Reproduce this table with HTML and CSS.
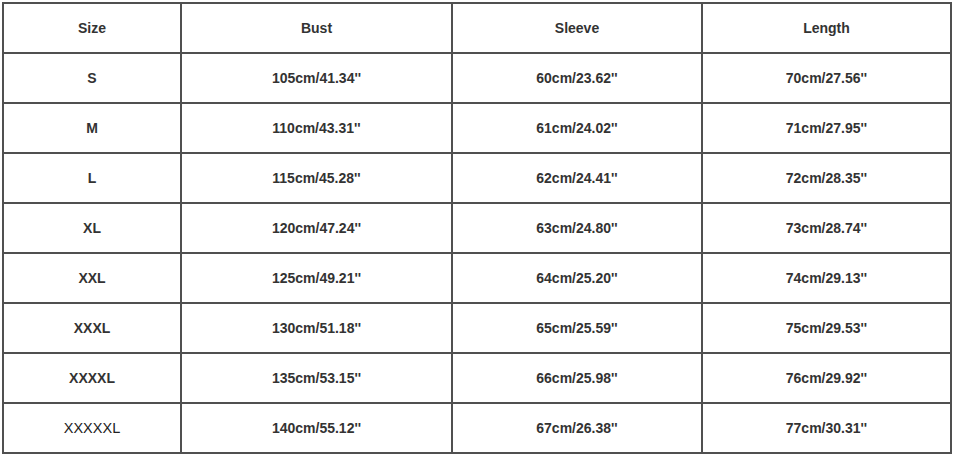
FILE: index.html
```html
<!DOCTYPE html>
<html>
<head>
<meta charset="utf-8">
<link rel="stylesheet" href="styles.css">
</head>
<body>
<table class="size-table">
  <colgroup>
    <col class="c1"><col class="c2"><col class="c3"><col class="c4">
  </colgroup>
  <tr><td>Size</td><td>Bust</td><td>Sleeve</td><td>Length</td></tr>
  <tr><td>S</td><td>105cm/41.34''</td><td>60cm/23.62''</td><td>70cm/27.56''</td></tr>
  <tr><td>M</td><td>110cm/43.31''</td><td>61cm/24.02''</td><td>71cm/27.95''</td></tr>
  <tr><td>L</td><td>115cm/45.28''</td><td>62cm/24.41''</td><td>72cm/28.35''</td></tr>
  <tr><td>XL</td><td>120cm/47.24''</td><td>63cm/24.80''</td><td>73cm/28.74''</td></tr>
  <tr><td>XXL</td><td>125cm/49.21''</td><td>64cm/25.20''</td><td>74cm/29.13''</td></tr>
  <tr><td>XXXL</td><td>130cm/51.18''</td><td>65cm/25.59''</td><td>75cm/29.53''</td></tr>
  <tr><td>XXXXL</td><td>135cm/53.15''</td><td>66cm/25.98''</td><td>76cm/29.92''</td></tr>
  <tr><td class="thin">XXXXXL</td><td>140cm/55.12''</td><td>67cm/26.38''</td><td>77cm/30.31''</td></tr>
</table>
</body>
</html>
```
FILE: styles.css
```css
html, body {
  margin: 0;
  background: #ffffff;
}
body {
  padding: 2px 0 0 2px;
  font-family: "Liberation Sans", Arial, sans-serif;
}
.size-table {
  border-collapse: collapse;
  table-layout: fixed;
  width: 949px;
}
.c1 { width: 178px; }
.c2 { width: 271px; }
.c3 { width: 250px; }
.c4 { width: 249px; }
.size-table td {
  border: 2px solid #505050;
  height: 48px;
  padding: 0;
  text-align: center;
  vertical-align: middle;
  font-size: 14px;
  font-weight: bold;
  color: #333333;
}
.size-table td.thin {
  font-weight: normal;
  font-size: 14.5px;
  color: #222;
}
```
